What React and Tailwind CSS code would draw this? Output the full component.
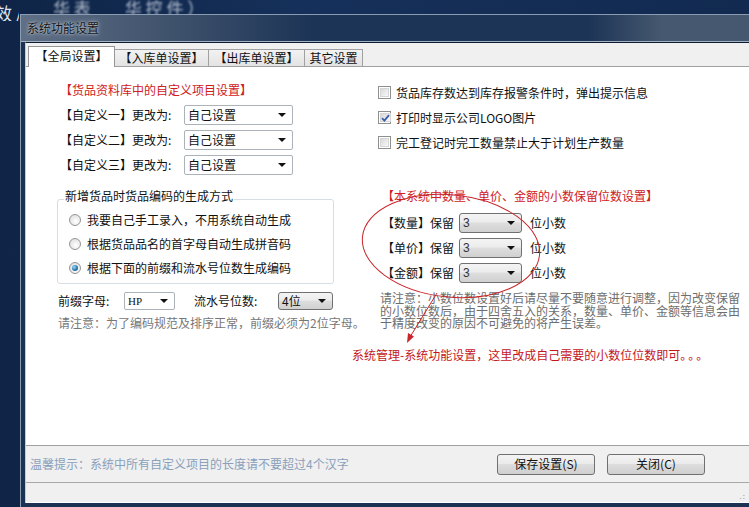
import React from 'react'

// small black drop-down triangle
const DropArrow = () => (
    <svg width="8" height="4" viewBox="0 0 8 4" className="shrink-0">
        <path d="M0 0h8L4 4z" fill="#111" />
    </svg>
)

const Combo = ({ value, className = '', vista = false, textClass = '' }) => (
    <div
        className={`flex items-center justify-between pl-[3px] pr-[6px] border ${vista
            ? 'border-[#707070] rounded-[3px] bg-[linear-gradient(#f4f4f4,#ececec_45%,#dedede_50%,#d0d0d0)]'
            : 'border-[#abb2ba] rounded-[2px] bg-white'
            } ${className}`}
    >
        <span className={`leading-none text-[#111] ${textClass}`}>{value}</span>
        <DropArrow />
    </div>
)

const Checkbox = ({ checked }) => (
    <span className="w-[13px] h-[13px] border border-[#8e8f8f] bg-white p-[1px] flex shrink-0">
        <span className="flex-1 border border-[#d6d6d6] bg-[linear-gradient(135deg,#d9d9d9,#f9f9f9)] flex items-center justify-center">
            {checked && (
                <svg width="9" height="8" viewBox="0 0 9 8">
                    <path d="M1 4.2 L3.4 6.6 L8 1.2" fill="none" stroke="#3b5fa8" strokeWidth="1.8" />
                </svg>
            )}
        </span>
    </span>
)

const Radio = ({ on }) => (
    <span className="w-[12px] h-[12px] rounded-full border border-[#959595] bg-[radial-gradient(circle_at_60%_65%,#ffffff,#d8d8d8)] flex items-center justify-center shrink-0">
        {on && (
            <span className="w-[6px] h-[6px] rounded-full bg-[radial-gradient(circle_at_35%_35%,#9ad8f6,#1f74ab_60%,#0c4674)]" />
        )}
    </span>
)

const Button = ({ children }) => (
    <button className="w-[98px] h-[21px] border border-[#707070] rounded-[3px] bg-[linear-gradient(#f3f3f3,#ebebeb_45%,#dddddd_50%,#cfcfcf)] text-[12px] leading-none text-[#111] flex items-center justify-center">
        {children}
    </button>
)

const CUSTOM_ROWS = ['【自定义一】更改为:', '【自定义二】更改为:', '【自定义三】更改为:']
const RADIOS = [
    { label: '我要自己手工录入，不用系统自动生成', on: false },
    { label: '根据货品品名的首字母自动生成拼音码', on: false },
    { label: '根据下面的前缀和流水号位数生成编码', on: true },
]
const CHECKS = [
    { label: '货品库存数达到库存报警条件时，弹出提示信息', checked: false },
    { label: '打印时显示公司LOGO图片', checked: true },
    { label: '完工登记时完工数量禁止大于计划生产数量', checked: false },
]
const DECIMALS = ['【数量】保留', '【单价】保留', '【金额】保留']

export default function App() {
    return (
        <div className="w-[749px] h-[507px] overflow-hidden bg-[linear-gradient(90deg,#0f2446,#15305a_40%,#122a50)] font-['Noto_Sans_CJK_SC',sans-serif] text-[12px] text-[#111]">
            {/* desktop text behind the dialog */}
            <div className="h-[14px] flex items-start text-[#dde5ef] text-[17px] whitespace-nowrap">
                <span className="-ml-[5px] mt-[4px] leading-[17px] w-[24px] overflow-hidden shrink-0">效 /</span>
                <div className="h-[14px] overflow-hidden ml-[34px]">
                    <span className="block h-[13px] leading-[13px] mt-[1px] blur-[1px] opacity-80">华 表</span>
                </div>
                <div className="h-[14px] overflow-hidden ml-[34px]">
                    <span className="block h-[13px] leading-[13px] mt-[1px] blur-[1px] opacity-80">华 控 件 ）</span>
                </div>
            </div>

            {/* dialog window */}
            <div className="relative ml-[20px] h-[494px] border-l border-t border-[#8a9cb2] bg-[#1b3253] pb-[5px]">
                {/* title bar */}
                <div className="h-[27px] border-b border-[#a3b2c3] flex items-center pl-[6px] bg-[linear-gradient(90deg,#5f6f85_0%,#3d506b_22%,#1c3456_40%,#1c3456_78%,#46586f_88%,#46586f_100%)]">
                    <span className="text-[12px] text-[#141414] [text-shadow:0_0_5px_#b9c3cf,0_0_2px_#c9d1db]">系统功能设置</span>
                </div>

                {/* client area */}
                <div className="ml-[4px] border-l border-t border-l-[#c4ccd6] border-t-[#0e1c33] bg-[#f0f0f0]">
                    {/* tabs */}
                    <div className="h-[24px] border-b border-[#a0a0a0] flex items-end pl-[2px]">
                        <div className="w-[87px] h-[21px] -mb-[1px] bg-white border border-b-0 border-[#969696] flex items-center justify-center text-[12px] pb-[2px]">
                            【全局设置】
                        </div>
                        <div className="w-[94px] h-[17px] border border-b-0 border-l-0 border-[#a0a0a0] bg-[linear-gradient(#f2f2f2,#e3e3e3)] flex items-center justify-center">
                            【入库单设置】
                        </div>
                        <div className="w-[96px] h-[17px] border border-b-0 border-l-0 border-[#a0a0a0] bg-[linear-gradient(#f2f2f2,#e3e3e3)] flex items-center justify-center">
                            【出库单设置】
                        </div>
                        <div className="w-[58px] h-[17px] border border-b-0 border-l-0 border-[#a0a0a0] bg-[linear-gradient(#f2f2f2,#e3e3e3)] flex items-center justify-center">
                            其它设置
                        </div>
                    </div>

                    {/* body */}
                    <div className="relative h-[379px] bg-white border-b border-[#a0a0a0] flex">
                        {/* left column */}
                        <div className="ml-[31px] w-[290px] shrink-0">
                            <div className="mt-[15px] pl-[3px] h-[16px] leading-[16px] text-[#d0201c]">【货品资料库中的自定义项目设置】</div>
                            {CUSTOM_ROWS.map((label, i) => (
                                <div key={label} className={`${i === 0 ? 'mt-[7px]' : 'mt-[5px]'} h-[20px] flex items-center pl-[3px]`}>
                                    <span className="w-[124px] shrink-0">{label}</span>
                                    <Combo value="自己设置" className="w-[109px] h-[20px]" />
                                </div>
                            ))}

                            {/* code generation group */}
                            <div className="relative mt-[24px] w-[277px] border border-[#d5dee5] rounded-[3px] pt-[8px] pb-[3px] pl-[11px]">
                                <span className="absolute left-[6px] -top-[12px] bg-white px-[1px] leading-[16px]">新增货品时货品编码的生成方式</span>
                                {RADIOS.map(r => (
                                    <div key={r.label} className="h-[24px] flex items-center">
                                        <Radio on={r.on} />
                                        <span className="ml-[6px]">{r.label}</span>
                                    </div>
                                ))}
                            </div>

                            <div className="mt-[8px] h-[18px] flex items-center pl-[1px]">
                                <span className="w-[66px] shrink-0">前缀字母:</span>
                                <Combo value="HP" className="w-[51px] h-[18px]" textClass="font-['Liberation_Serif',serif] text-[11px]" />
                                <span className="ml-[19px] w-[84px] shrink-0">流水号位数:</span>
                                <Combo value="4位" vista className="w-[55px] h-[18px]" textClass="text-[12px]" />
                            </div>
                            <div className="mt-[5px] pl-[1px] leading-[16px] text-[#777] whitespace-nowrap">请注意：为了编码规范及排序正常，前缀必须为2位字母。</div>
                        </div>

                        {/* right column */}
                        <div className="ml-[31px]">
                            <div className="mt-[13px]">
                                {CHECKS.map(c => (
                                    <div key={c.label} className="h-[25px] flex items-center">
                                        <Checkbox checked={c.checked} />
                                        <span className="ml-[5px] whitespace-nowrap">{c.label}</span>
                                    </div>
                                ))}
                            </div>
                            <div className="mt-[33px] pl-[4px] h-[16px] leading-[16px] text-[#d0201c] whitespace-nowrap">【本系统中数量、单价、金额的小数保留位数设置】</div>
                            <div className="mt-[6px] pl-[4px]">
                                {DECIMALS.map(label => (
                                    <div key={label} className="h-[25px] flex items-center">
                                        <span className="w-[77px] shrink-0">{label}</span>
                                        <Combo value="3" vista className="w-[63px] h-[20px]" textClass="font-['Liberation_Sans',sans-serif] text-[12px] text-[#333]" />
                                        <span className="ml-[8px]">位小数</span>
                                    </div>
                                ))}
                            </div>
                            <p className="mt-[7px] pl-[2px] w-[364px] leading-[12.5px] text-[#6e6e6e]">
                                请注意：小数位数设置好后请尽量不要随意进行调整，因为改变保留的小数位数后，由于四舍五入的关系，数量、单价、金额等信息会由于精度改变的原因不可避免的将产生误差。
                            </p>
                            <div className="mt-[17px] -ml-[26px] h-[16px] leading-[16px] text-[#c4161c] whitespace-nowrap">
                                系统管理-系统功能设置，这里改成自己需要的小数位位数即可<span className="tracking-[2px]">。。。</span>
                            </div>
                        </div>

                        {/* hand-drawn annotation over the form */}
                        <svg className="absolute inset-0 pointer-events-none" width="723" height="379">
                            <ellipse cx="425" cy="179" rx="89" ry="51" transform="rotate(6 425 179)" fill="none" stroke="#c8262a" strokeWidth="1" />
                            <line x1="411" y1="226" x2="384" y2="270" stroke="#c8262a" strokeWidth="1" />
                            <path d="M381 276 L388 269.5 L382 266 Z" fill="#c8262a" />
                        </svg>
                    </div>

                    {/* hint + buttons */}
                    <div className="h-[37px] border-b border-[#a8a8a8] flex items-center pl-[4px] pr-[44px]">
                        <span className="text-[#8aa0bb] whitespace-nowrap">温馨提示：系统中所有自定义项目的长度请不要超过4个汉字</span>
                        <div className="ml-auto flex gap-[12px]">
                            <Button>保存设置(S)</Button>
                            <Button>关闭(C)</Button>
                        </div>
                    </div>
                    <div className="h-[20px] border-b border-white flex items-end justify-end pr-[3px] pb-[2px]">
                        <span className="text-[8px] leading-none text-[#9a9a9a] tracking-[1px]">.:</span>
                    </div>
                </div>
            </div>
        </div>
    )
}
